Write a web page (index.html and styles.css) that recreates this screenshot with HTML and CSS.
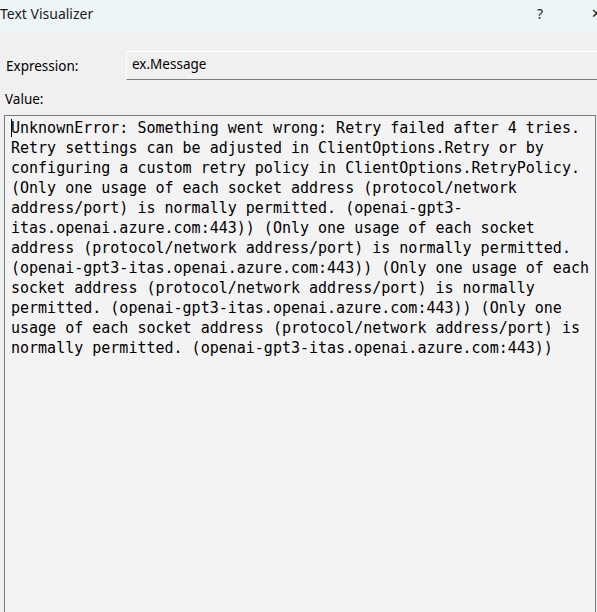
FILE: index.html
```html
<!DOCTYPE html>
<html>
<head>
<meta charset="utf-8">
<link rel="stylesheet" href="styles.css">
</head>
<body>
<div class="window">
  <div class="titlebar">
    <span class="title">Text Visualizer</span>
    <div class="title-buttons">
      <span class="help">?</span>
      <span class="close">✕</span>
    </div>
  </div>
  <div class="content">
    <div class="expr-row">
      <span class="label expr-label">Expression:</span>
      <div class="expr-field">ex.Message</div>
    </div>
    <div class="label value-label">Value:</div>
    <div class="value-box"><span class="caret"></span><div class="value-text">UnknownError: Something went wrong: Retry failed after 4 tries.
Retry settings can be adjusted in ClientOptions.Retry or by
configuring a custom retry policy in ClientOptions.RetryPolicy.
(Only one usage of each socket address (protocol/network
address/port) is normally permitted. (openai-gpt3-
itas.openai.azure.com:443)) (Only one usage of each socket
address (protocol/network address/port) is normally permitted.
(openai-gpt3-itas.openai.azure.com:443)) (Only one usage of each
socket address (protocol/network address/port) is normally
permitted. (openai-gpt3-itas.openai.azure.com:443)) (Only one
usage of each socket address (protocol/network address/port) is
normally permitted. (openai-gpt3-itas.openai.azure.com:443))</div></div>
  </div>
</div>
</body>
</html>
```
FILE: styles.css
```css
html, body {
  margin: 0;
  padding: 0;
  width: 597px;
  height: 612px;
  overflow: hidden;
  background: #f0f0f0;
}
.window {
  width: 597px;
  height: 612px;
  display: flex;
  flex-direction: column;
  font-family: "Noto Sans", "Open Sans", sans-serif;
  color: #000;
}
.titlebar {
  height: 32px;
  background: #eef5f9;
  display: flex;
  align-items: center;
  justify-content: space-between;
  flex-shrink: 0;
}
.title {
  font-size: 14px;
  margin-top: -6px;
  color: #1a1a1a;
}
.title-buttons {
  display: flex;
  align-items: center;
  margin-top: -6px;
}
.help {
  font-size: 14px;
  margin-right: 48px;
  color: #222;
}
.close {
  font-size: 13px;
  width: 6px;
  overflow: hidden;
  color: #222;
}
.content {
  flex: 1;
  display: flex;
  flex-direction: column;
  padding-top: 19px;
}
.expr-row {
  display: flex;
  align-items: stretch;
  height: 29px;
}
.label {
  font-size: 13.5px;
  color: #000;
}
.expr-label {
  width: 120px;
  padding-left: 6px;
  padding-top: 6px;
}
.expr-field {
  flex: 1;
  border-top: 1px solid #ffffff;
  border-left: 1px solid #ffffff;
  border-bottom: 1px solid #7a7a7a;
  background: #f0f0f0;
  font-size: 13.5px;
  padding-left: 5px;
  padding-top: 3px;
  box-sizing: border-box;
}
.value-label {
  padding-left: 5px;
  margin-top: 10px;
  height: 25px;
}
.value-box {
  flex: 1;
  margin-left: 4px;
  margin-right: 1px;
  border: 1px solid #7a7a7a;
  border-bottom: none;
  background: #f3f3f3;
  position: relative;
  padding: 2px 0 0 6px;
}
.value-text {
  font-family: "DejaVu Sans Mono", "Liberation Mono", monospace;
  font-size: 15px;
  line-height: 20px;
  white-space: pre;
  color: #000;
}
.caret {
  position: absolute;
  left: 6px;
  top: 3px;
  width: 1px;
  height: 18px;
  background: #000;
}
```
